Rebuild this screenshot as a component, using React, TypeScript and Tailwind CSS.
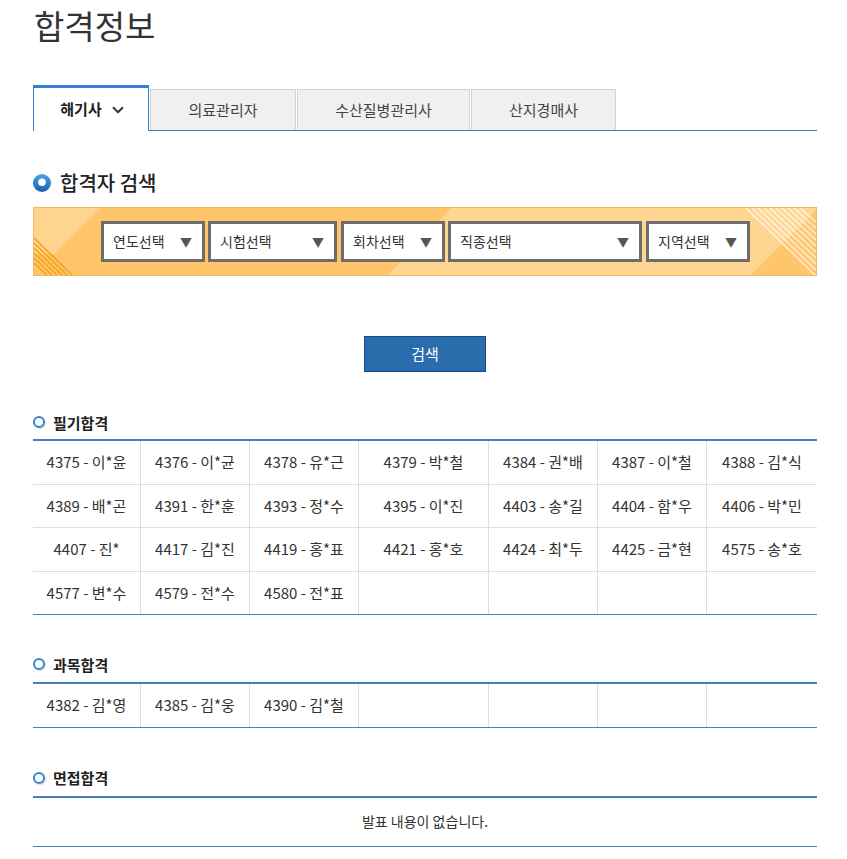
import { ChevronDown } from 'lucide-react'

const font = { fontFamily: '"Noto Sans CJK KR", "Noto Sans", sans-serif' }

const TABS = ['의료관리자', '수산질병관리사', '산지경매사']
const TAB_W = ['w-[146px]', 'w-[173px]', 'w-[145px]']

const SELECTS = [
  { label: '연도선택', cls: 'w-[104px]' },
  { label: '시험선택', cls: 'w-[129px] ml-[3px]' },
  { label: '회차선택', cls: 'w-[104px] ml-[4px]' },
  { label: '직종선택', cls: 'w-[194px] ml-[3px]' },
  { label: '지역선택', cls: 'w-[104px] ml-[4px]' },
]

const WRITTEN = [
  '4375 - 이*윤', '4376 - 이*균', '4378 - 유*근', '4379 - 박*철', '4384 - 권*배', '4387 - 이*철', '4388 - 김*식',
  '4389 - 배*곤', '4391 - 한*훈', '4393 - 정*수', '4395 - 이*진', '4403 - 송*길', '4404 - 함*우', '4406 - 박*민',
  '4407 - 진*', '4417 - 김*진', '4419 - 홍*표', '4421 - 홍*호', '4424 - 최*두', '4425 - 금*현', '4575 - 송*호',
  '4577 - 변*수', '4579 - 전*수', '4580 - 전*표',
]

const SUBJECT = ['4382 - 김*영', '4385 - 김*웅', '4390 - 김*철']

function SubHeading({ title }: { title: string }) {
  return (
    <div className="flex items-center gap-[8px] h-[20px]">
      <span className="w-[12px] h-[12px] rounded-full border-[2.5px] border-[#3a82c8] shadow-[1px_1px_1px_rgba(0,0,0,0.15)]" />
      <span className="text-[15px] font-bold text-[#222] leading-none">{title}</span>
    </div>
  )
}

function ResultGrid({ items }: { items: string[] }) {
  const rows: (string | null)[][] = []
  for (let i = 0; i < items.length; i += 7) {
    const r: (string | null)[] = items.slice(i, i + 7)
    while (r.length < 7) r.push(null)
    rows.push(r)
  }
  return (
    <div className="border-t-2 border-b border-[#4a80b8]">
      {rows.map((row, ri) => (
        <div
          key={ri}
          className={`grid grid-cols-[108px_109px_109px_130px_109px_109px_110px] ${
            ri < rows.length - 1 ? 'border-b border-[#dddddd]' : ''
          }`}
        >
          {row.map((c, ci) => (
            <div
              key={ci}
              className={`h-[42.5px] flex items-center justify-center text-[15px] text-[#333] ${
                ci < 6 ? 'border-r border-[#dddddd]' : ''
              }`}
            >
              {c}
            </div>
          ))}
        </div>
      ))}
    </div>
  )
}

function BannerArt() {
  return (
    <svg
      className="absolute inset-0 w-full h-full"
      viewBox="0 0 782 67"
      preserveAspectRatio="none"
    >
      <rect width="782" height="67" fill="#ffc56b" />
      <polygon points="0,0 67,0 20,46 0,46" fill="#ffd48e" />
      <polygon points="417,0 782,0 782,67 354,67" fill="#ffd691" />
      <polygon points="717,67 782,2 782,67" fill="#ffc56b" />
      <g stroke="#f5a21e" strokeWidth="1.6">
        <line x1="0" y1="30" x2="38" y2="67" />
        <line x1="0" y1="35" x2="33" y2="67" />
        <line x1="0" y1="40" x2="28" y2="67" />
        <line x1="0" y1="45" x2="23" y2="67" />
        <line x1="0" y1="50" x2="18" y2="67" />
        <line x1="0" y1="55" x2="13" y2="67" />
      </g>
      <g stroke="#ffffff" strokeOpacity="0.6" strokeWidth="1.8">
        <line x1="712" y1="0" x2="782" y2="68" />
        <line x1="718" y1="0" x2="782" y2="62" />
        <line x1="724" y1="0" x2="782" y2="56" />
        <line x1="730" y1="0" x2="782" y2="50" />
        <line x1="736" y1="0" x2="782" y2="44" />
        <line x1="742" y1="0" x2="782" y2="38" />
        <line x1="748" y1="0" x2="782" y2="32" />
        <line x1="754" y1="0" x2="782" y2="26" />
        <line x1="760" y1="0" x2="782" y2="20" />
        <line x1="766" y1="0" x2="782" y2="14" />
      </g>
    </svg>
  )
}

export default function App() {
  return (
    <div className="min-h-[859px] bg-white pl-[33px] pr-[30px]" style={font}>
      <h1 className="pt-[3px] text-[33px] leading-[44px] text-[#333] font-normal pl-[1px]">합격정보</h1>

      {/* Tabs */}
      <div className="mt-[38px] flex items-end h-[46px] border-b border-[#3182ce]">
        <div className="w-[116px] h-[46px] -mb-px bg-white border-t-[3px] border-x border-[#3182ce] flex items-center justify-center gap-[7px] pl-[5px]">
          <span className="text-[15px] font-bold text-[#222]">해기사</span>
          <ChevronDown className="w-[18px] h-[18px] text-[#333]" strokeWidth={2.5} />
        </div>
        {TABS.map((t, i) => (
          <div
            key={t}
            className={`${TAB_W[i]} h-[41px] ml-[1px] bg-[#f0f0f0] border border-b-0 border-[#d2d2d2] flex items-center justify-center text-[15px] text-[#444]`}
          >
            {t}
          </div>
        ))}
      </div>

      {/* Search heading */}
      <div className="mt-[39px] flex items-center gap-[9px] h-[26px]">
        <svg width="18" height="18" viewBox="0 0 18 18">
          <defs>
            <linearGradient id="ball" x1="0" y1="0" x2="0" y2="1">
              <stop offset="0" stopColor="#4aa3ea" />
              <stop offset="1" stopColor="#1a5fb0" />
            </linearGradient>
          </defs>
          <circle cx="9" cy="9" r="9" fill="url(#ball)" />
          <circle cx="9" cy="8.3" r="3.8" fill="#ffffff" />
        </svg>
        <span className="text-[20px] font-medium text-[#222] leading-none">합격자 검색</span>
      </div>

      {/* Filter banner */}
      <div className="relative mt-[11px] h-[69px] border border-[#f4bb5c] flex items-center pl-[67px] overflow-hidden">
        <BannerArt />
        {SELECTS.map((s) => (
          <div
            key={s.label}
            className={`relative ${s.cls} h-[41px] bg-white border-[3px] border-[#6d6d6d] flex items-center justify-between pl-[9px] pr-[10px]`}
          >
            <span className="text-[14px] text-[#333]">{s.label}</span>
            <span className="text-[12px] text-[#555] leading-none">▼</span>
          </div>
        ))}
      </div>

      {/* Search button */}
      <div className="flex justify-center mt-[60px]">
        <button className="w-[122px] h-[36px] bg-[#2a6dac] border border-[#17498a] text-white text-[15px]">
          검색
        </button>
      </div>

      {/* 필기합격 */}
      <div className="mt-[40px]">
        <SubHeading title="필기합격" />
      </div>
      <div className="mt-[7px]">
        <ResultGrid items={WRITTEN} />
      </div>

      {/* 과목합격 */}
      <div className="mt-[39px]">
        <SubHeading title="과목합격" />
      </div>
      <div className="mt-[8px]">
        <ResultGrid items={SUBJECT} />
      </div>

      {/* 면접합격 */}
      <div className="mt-[40px]">
        <SubHeading title="면접합격" />
      </div>
      <div className="mt-[8px] border-t-2 border-b border-[#4a80b8] h-[51px] flex items-center justify-center text-[14px] text-[#333]">
        발표 내용이 없습니다.
      </div>
    </div>
  )
}
